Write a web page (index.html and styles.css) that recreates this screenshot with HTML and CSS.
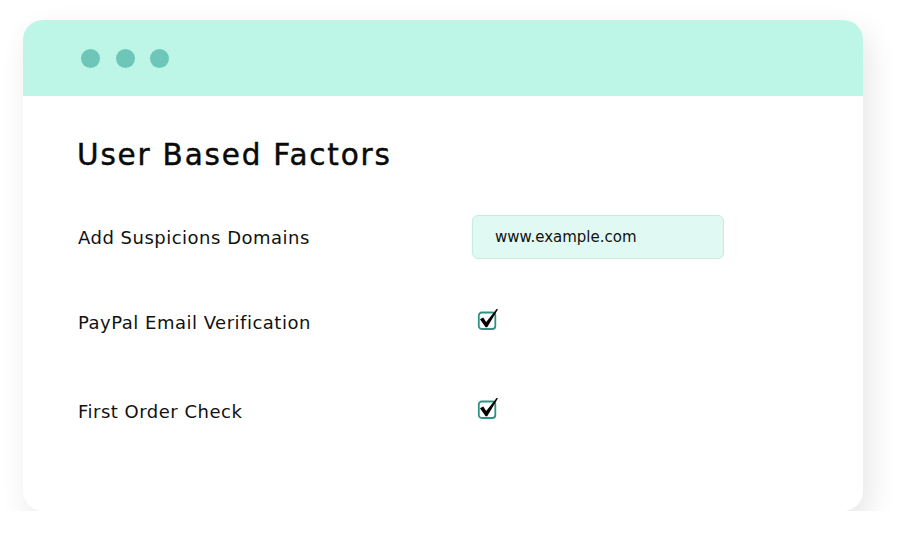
FILE: index.html
```html
<!DOCTYPE html>
<html>
<head>
<meta charset="utf-8">
<link rel="stylesheet" href="styles.css">
</head>
<body>
<div class="card">
  <div class="titlebar">
    <span class="dot"></span><span class="dot"></span><span class="dot"></span>
  </div>
  <div class="content">
    <h1 class="title">User Based Factors</h1>
    <div class="rows">
      <div class="label row1">Add Suspicions Domains</div>
      <div class="field row1"><div class="input">www.example.com</div></div>
      <div class="label row2">PayPal Email Verification</div>
      <div class="field row2">
        <svg class="check" width="22" height="22" viewBox="0 0 22 22">
          <rect x="1.8" y="4.5" width="16.5" height="16.5" rx="3" fill="#fff" stroke="#2b9384" stroke-width="1.8"/>
          <path d="M3 11.2 L6.2 9.6 L9.2 14 L19.6 1 L21 1.2 L10.2 19.2 L8.6 19.2 Z" fill="#000"/>
        </svg>
      </div>
      <div class="label row3">First Order Check</div>
      <div class="field row3">
        <svg class="check" width="22" height="22" viewBox="0 0 22 22">
          <rect x="1.8" y="4.5" width="16.5" height="16.5" rx="3" fill="#fff" stroke="#2b9384" stroke-width="1.8"/>
          <path d="M3 11.2 L6.2 9.6 L9.2 14 L19.6 1 L21 1.2 L10.2 19.2 L8.6 19.2 Z" fill="#000"/>
        </svg>
      </div>
    </div>
  </div>
</div>
</body>
</html>
```
FILE: styles.css
```css
html, body {
  margin: 0;
  padding: 0;
  background: #ffffff;
}
body {
  padding: 20px 0 0 23px;
  font-family: "DejaVu Sans", "Noto Sans", sans-serif;
  color: #111;
}
.card {
  width: 840px;
  height: 491px;
  border-radius: 20px;
  background: #fff;
  box-shadow: 6px 12px 30px rgba(0, 0, 0, 0.10);
  overflow: hidden;
}
.titlebar {
  height: 76px;
  background: #bdf5e6;
  display: flex;
  align-items: center;
  gap: 15.5px;
  padding-left: 58px;
}
.dot {
  width: 19px;
  height: 19px;
  border-radius: 50%;
  background: #6dc6b8;
  margin-top: 1px;
}
.content {
  padding: 0 0 0 54px;
}
.title {
  margin: 0;
  padding-top: 42px;
  font-size: 29.5px;
  line-height: 34px;
  font-weight: 500;
  letter-spacing: 1.8px;
  -webkit-text-stroke: 0.45px #0a0a0a;
  color: #0a0a0a;
}
.rows {
  display: grid;
  grid-template-columns: 395px 252px;
  grid-template-rows: 44px 44px 44px;
  row-gap: 41px;
  margin-top: 43px;
}
.label {
  display: flex;
  align-items: center;
  padding-left: 1px;
  font-size: 18px;
  letter-spacing: 0.5px;
  color: #111;
}
.field {
  display: flex;
  align-items: center;
}
.row3 {
  transform: translateY(4px);
}
.input {
  box-sizing: border-box;
  width: 252px;
  height: 44px;
  border: 1px solid #c4ece1;
  border-radius: 6px;
  background: #e0f9f3;
  display: flex;
  align-items: center;
  padding-left: 22px;
  font-size: 15px;
  color: #111;
}
.check {
  display: block;
  margin-left: 5px;
  margin-top: -6px;
}
```
